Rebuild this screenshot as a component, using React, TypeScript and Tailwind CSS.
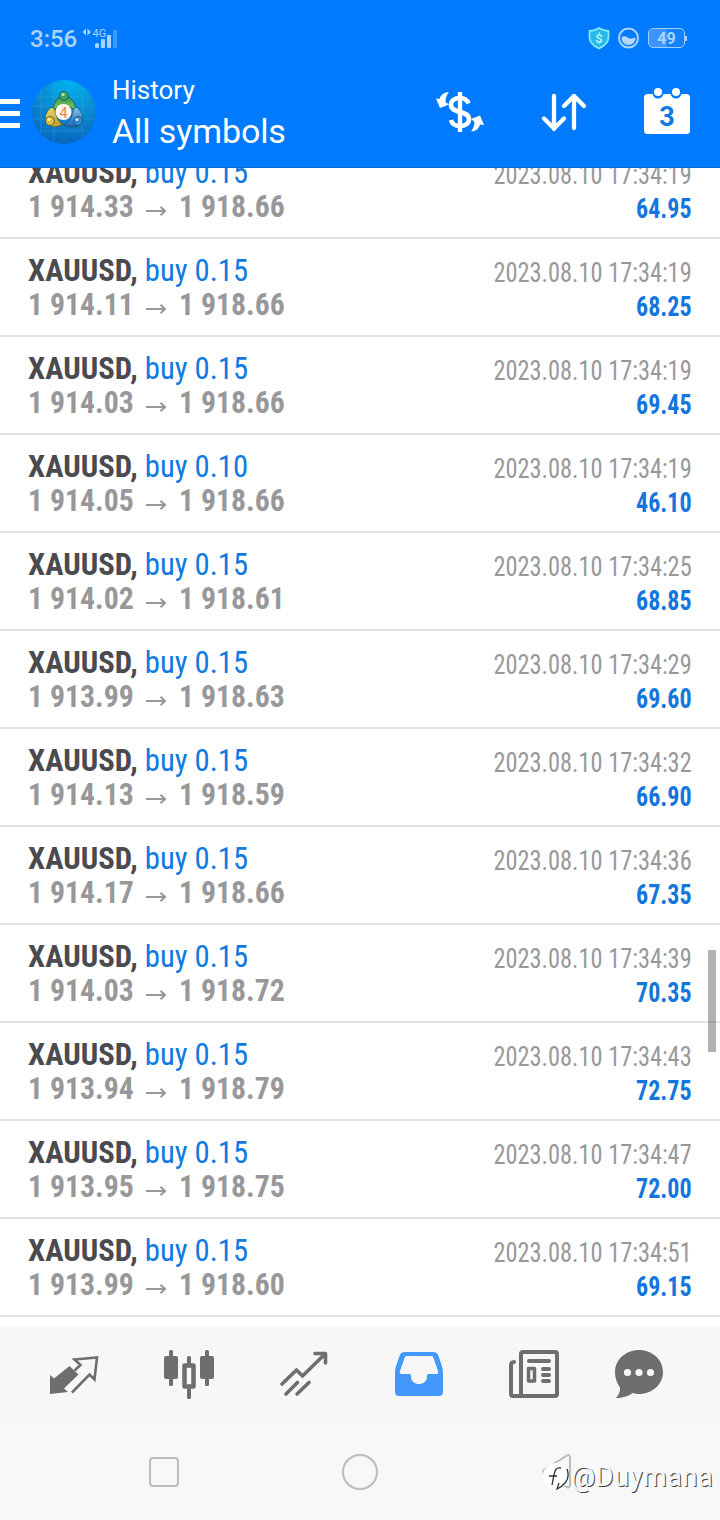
import { FC, ReactNode } from "react";

interface Deal {
  volume: string;
  open: string;
  close: string;
  time: string;
  profit: string;
}

const deals: Deal[] = [
  { volume: "0.15", open: "1 914.33", close: "1 918.66", time: "17:34:19", profit: "64.95" },
  { volume: "0.15", open: "1 914.11", close: "1 918.66", time: "17:34:19", profit: "68.25" },
  { volume: "0.15", open: "1 914.03", close: "1 918.66", time: "17:34:19", profit: "69.45" },
  { volume: "0.10", open: "1 914.05", close: "1 918.66", time: "17:34:19", profit: "46.10" },
  { volume: "0.15", open: "1 914.02", close: "1 918.61", time: "17:34:25", profit: "68.85" },
  { volume: "0.15", open: "1 913.99", close: "1 918.63", time: "17:34:29", profit: "69.60" },
  { volume: "0.15", open: "1 914.13", close: "1 918.59", time: "17:34:32", profit: "66.90" },
  { volume: "0.15", open: "1 914.17", close: "1 918.66", time: "17:34:36", profit: "67.35" },
  { volume: "0.15", open: "1 914.03", close: "1 918.72", time: "17:34:39", profit: "70.35" },
  { volume: "0.15", open: "1 913.94", close: "1 918.79", time: "17:34:43", profit: "72.75" },
  { volume: "0.15", open: "1 913.95", close: "1 918.75", time: "17:34:47", profit: "72.00" },
  { volume: "0.15", open: "1 913.99", close: "1 918.60", time: "17:34:51", profit: "69.15" },
];

const StatusBar = () => (
  <div className="flex h-[56px] items-start justify-between pl-[30px] pr-[32px] text-[#a9d4ff]">
    <div className="flex pt-[24px]">
      <span className="w-[52px] text-[24px] font-medium leading-[30px]">3:56</span>
      <svg width="36" height="24" viewBox="0 0 36 24" className="mt-[2px]">
        <path d="M4 2.500 0.500 6 4 9.500zM5.500 2.500 9 6l-3.500 3.500z" fill="currentColor" />
        <text x="10.500" y="10.500" fontSize="11" fill="currentColor">4G</text>
        <rect x="13" y="17" width="4" height="5" rx="1.500" fill="currentColor" />
        <rect x="19" y="13" width="4" height="9" rx="1" fill="currentColor" />
        <rect x="25" y="9" width="4" height="13" rx="1" fill="currentColor" />
        <rect x="31" y="4" width="4" height="18" rx="1" fill="#3d9aff" />
      </svg>
    </div>
    <div className="flex items-center pt-[26px]">
      <svg width="24" height="24" viewBox="0 0 24 24">
        <path d="M12 2c3 2 6 2.800 9.500 3v6c0 5.500-4 9-9.500 11.500C6.500 20 2.500 16.500 2.500 11V5C6 4.800 9 4 12 2z" fill="#27b7e8" stroke="#7feaf5" strokeWidth="1.800" />
        <text x="12" y="17" fontSize="13" fontWeight="700" textAnchor="middle" fill="#a9f5ff">$</text>
      </svg>
      <svg width="24" height="24" viewBox="0 0 24 24" className="ml-[6px]">
        <circle cx="11.500" cy="12" r="9.500" fill="none" stroke="#a9d4ff" strokeWidth="2" />
        <path d="M4.500 11.500c3-2.500 5-.500 7 .500s4.500.500 7-.500c0 4.500-3 7.500-7 7.500s-7-3.500-7-7.500z" fill="#b5d6ff" />
      </svg>
      <div className="ml-[7px] flex h-[20px] w-[37px] items-center justify-center rounded-[5px] border border-[#9ccfff] bg-[linear-gradient(90deg,#3d93ff_50%,#1482ff_50%)] pt-[2px] text-[16px] font-bold leading-none">
        49
      </div>
      <div className="mr-[1px] h-[5px] w-[2px] bg-[#a9d4ff]" />
    </div>
  </div>
);

const Logo = () => (
  <svg width="64" height="64" viewBox="0 0 64 64">
    <defs>
      <radialGradient id="disc" cx="0.600" cy="0" r="1">
        <stop offset="0" stopColor="#00b4ee" />
        <stop offset="0.600" stopColor="#0a86cf" />
        <stop offset="1" stopColor="#0768bd" />
      </radialGradient>
      <linearGradient id="green" x1="0" y1="0" x2="0" y2="1">
        <stop offset="0" stopColor="#2e8f55" />
        <stop offset="1" stopColor="#8ed05a" />
      </linearGradient>
      <linearGradient id="gold" x1="0" y1="0" x2="1" y2="1">
        <stop offset="0" stopColor="#f3df6a" />
        <stop offset="1" stopColor="#b78f22" />
      </linearGradient>
      <linearGradient id="blue" x1="0" y1="0" x2="0" y2="1">
        <stop offset="0" stopColor="#86c6f2" />
        <stop offset="1" stopColor="#1c62b8" />
      </linearGradient>
    </defs>
    <circle cx="32" cy="32" r="32" fill="url(#disc)" />
    <path d="M6 17h52M1 26h62M1 39h62M7 51h50M9 10v44M22 2v60M50 6v52" stroke="#4fb4ea" strokeWidth="0.600" opacity="0.500" />
    <g stroke="#174f4f" strokeWidth="0.700">
      <path d="M22 30c-1-7 3-13 10-14 8 1 12 7 11 14-4-3-6-4-11-4s-7 1-10 4z" fill="url(#green)" />
      <path d="M20 27c-5 3-8 9-6 16 5 5 12 5 17 1-5-3-6-6-7-10-.500-3-1-5-4-7z" fill="url(#gold)" />
      <path d="M44 27c5 3 8 9 6 16-4 5-12 5-18 2 5-3 7-6 8-10 .500-3 1-6 4-8z" fill="url(#blue)" />
      <circle cx="32" cy="16" r="4.500" fill="#3ca45c" />
      <circle cx="18" cy="41" r="4.500" fill="#dfb93a" />
      <circle cx="46" cy="41" r="4.500" fill="#3188d2" />
    </g>
    <circle cx="31" cy="14.500" r="1.600" fill="#b8e9b6" />
    <circle cx="17" cy="39.500" r="1.600" fill="#fff3ae" />
    <circle cx="45" cy="39.500" r="1.600" fill="#c4e5fb" />
    <circle cx="31.500" cy="32" r="8" fill="#fff6ee" />
    <text x="31.500" y="37.500" fontSize="15" textAnchor="middle" fill="#f08550">4</text>
  </svg>
);

const Header = () => (
  <header className="z-10 h-[168px] shrink-0 border-b border-[#0b66d0] bg-[#007aff] text-white">
    <StatusBar />
    <div className="flex h-[111px] items-start">
      <div className="mt-[43px] w-[20px] space-y-[7px]">
        <div className="h-[5px] bg-white" />
        <div className="h-[5px] bg-white" />
        <div className="h-[5px] bg-white" />
      </div>
      <div className="ml-[12px] mt-[24px]">
        <Logo />
      </div>
      <div className="ml-[16px] mt-[17px] w-[300px]">
        <p className="text-[26px] leading-[34px]">History</p>
        <p className="mt-[4px] text-[34px] leading-[40px] tracking-[-0.100px]">All symbols</p>
      </div>
      <svg width="52" height="48" viewBox="0 0 52 48" className="ml-[22px] mt-[32px]" fill="none">
        <path d="M35.500 15C34 11 31 9.500 27 9.500c-5.500 0-9 2.500-9 7 0 9 18 5 18 14 0 4.500-3.500 7-9 7-4.500 0-8-2-9-6" transform="translate(-1 0.500)" stroke="#fff" strokeWidth="4.600" />
        <path d="M26 4v40" stroke="#fff" strokeWidth="4.400" />
        <path d="M15 4C9 4.500 6.500 7.500 5.500 11L2 10.500 6 20l9-3.500-3.500-2.500C11.500 10 12.500 7 15 4zM37 43.500c6-.500 8-3.500 9-7l4 .500-4-9.500-9 3.500 3.500 3c0 4-1.500 7-3.500 9.500z" fill="#fff" />
      </svg>
      <svg width="48" height="40" viewBox="0 0 48 40" className="ml-[54px] mt-[36px]" fill="none" stroke="#fff" strokeWidth="4.300" strokeLinecap="round" strokeLinejoin="round">
        <path d="M14 4v33M4 26.500 14 36.500l10-10M34 36V4M24 14 34 4l10 10" />
      </svg>
      <svg width="48" height="48" viewBox="0 0 48 48" className="ml-[55px] mt-[31px]">
        <rect x="1" y="7" width="46" height="40" rx="3.500" fill="#fff" />
        <circle cx="15" cy="6" r="5.500" fill="#007aff" />
        <circle cx="33" cy="6" r="5.500" fill="#007aff" />
        <circle cx="15" cy="5" r="4" fill="#fff" />
        <circle cx="33" cy="5" r="4" fill="#fff" />
        <text x="24" y="38.500" fontSize="27" fontWeight="700" textAnchor="middle" fill="#1478e0">3</text>
      </svg>
    </div>
  </header>
);

const DealRow: FC<{ deal: Deal }> = ({ deal }) => (
  <div className="flex h-[98px] justify-between border-b-2 border-[#e2e2e4] px-[28px] pt-[14px]">
    <div>
      <p className="origin-left scale-x-[0.958] whitespace-nowrap text-[32px] leading-[34px] text-[#0f7ae0]">
        <span className="font-bold text-[#4a4a4f]">XAUUSD,</span> buy {deal.volume}
      </p>
      <div className="flex whitespace-nowrap text-[32px] font-bold leading-[34px] text-[#98989a]">
        <p className="w-[118px] origin-left scale-x-[0.93]">{deal.open}</p>
        <svg width="20" height="10" viewBox="0 0 20 10" className="mr-[13px] mt-[17px]" fill="none" stroke="currentColor" strokeWidth="2">
          <path d="M0 5h19M14.500 0.800 19 5l-4.500 4.200" />
        </svg>
        <p className="origin-left scale-x-[0.93]">{deal.close}</p>
      </div>
    </div>
    <div className="pt-[3px] text-right">
      <p className="origin-right scale-x-[0.902] whitespace-nowrap text-[27px] leading-[34px] text-[#98989a]">2023.08.10 {deal.time}</p>
      <p className="origin-right scale-x-[0.89] text-[27px] font-bold leading-[34px] text-[#1476dc]">{deal.profit}</p>
    </div>
  </div>
);

const Tab: FC<{ children: ReactNode }> = ({ children }) => (
  <svg width="54" height="52" viewBox="0 0 54 52" fill="none" className="last:-ml-[10px]">
    {children}
  </svg>
);

const TabBar = () => (
  <nav className="flex h-[98px] items-start gap-[61px] bg-[#f7f7f7] pl-[47px] pt-[22px] text-[#6e6e6e]">
    <Tab>
      <path d="M22.500 18 31.500 26.500 17 40.500l4 3.500-18 2V27l4 3.500z" fill="currentColor" />
      <path d="M28 23.500 34 18 28 12.500l22.500-2L48 32.500l-5-5-17.500 18" transform="translate(-.5 -1)" stroke="currentColor" strokeWidth="2.600" />
    </Tab>
    <Tab>
      <g fill="currentColor">
        <rect x="2" y="8" width="14" height="23" rx="2" />
        <rect x="7" y="2" width="4" height="36" rx="1.500" />
        <rect x="38" y="8" width="14" height="23" rx="2" />
        <rect x="43" y="2" width="4" height="36" rx="1.500" />
        <rect x="25" y="8" width="4" height="10" rx="1.500" />
        <rect x="25" y="40" width="4" height="11" rx="1.500" />
      </g>
      <rect x="22.500" y="17.500" width="9" height="21" stroke="currentColor" strokeWidth="4.500" strokeLinejoin="round" />
    </Tab>
    <Tab>
      <path d="M5 36 19.500 22l6 6L48 6M38 5.500h10.500V15M9 46l11.500-11.500M20 46l12-11.500" stroke="currentColor" strokeWidth="3.600" strokeLinecap="round" strokeLinejoin="round" />
    </Tab>
    <Tab>
      <path d="M13 4h28c3 0 4.500 1 5.500 4C49 15 51 20 51 25v19c0 2.500-1.500 4-4 4H7c-2.500 0-4-1.500-4-4V25c0-5 2-10 4.500-17C8.500 5 10 4 13 4z" fill="#4398fb" />
      <path d="M15 8h24c1.500 0 2 .500 2.500 2L46 23c.500 2 0 3-1.500 3H37c-2 0-2 1-2 2.500 0 10-16 10-16 0 0-1.500 0-2.500-2-2.500H9.500C8 26 7.500 25 8 23l4.500-13c.500-1.500 1-2 2.500-2z" fill="#f7f7f7" />
    </Tab>
    <Tab>
      <g stroke="currentColor" strokeWidth="4" strokeLinecap="round" strokeLinejoin="round">
        <rect x="14" y="4" width="36" height="44" rx="2" />
        <path d="M14 48H6c-2 0-2-1-2-2V17c0-1.500 1-3 3-3M22 13h20M36 21h6M36 27h6M36 33h6" />
      </g>
      <rect x="21.500" y="20.500" width="6" height="12.500" stroke="currentColor" strokeWidth="3.500" strokeLinejoin="round" />
    </Tab>
    <Tab>
      <path d="M27 2c13 0 24 9.500 24 22S40 46 27 46c-2.500 0-4.500-.500-6.500-1-4 3.500-10 5-16.500 5 3-3.500 4.500-7 4-10.500C5 35.500 3 30 3 24 3 11.500 14 2 27 2z" fill="currentColor" />
      <circle cx="15.500" cy="24.500" r="3.600" fill="#f7f7f7" />
      <circle cx="27" cy="24.500" r="3.600" fill="#f7f7f7" />
      <circle cx="38.500" cy="24.500" r="3.600" fill="#f7f7f7" />
    </Tab>
  </nav>
);

const SystemBar = () => (
  <div className="relative flex h-[96px] items-start justify-between bg-[#f8f8f8] pl-[149px] pr-[147px] pt-[30px]">
    <div className="mt-[3px] h-[30px] w-[30px] rounded-[4px] border-2 border-[#bcbcbc]" />
    <div className="h-[36px] w-[36px] rounded-full border-2 border-[#bcbcbc]" />
    <svg width="32" height="36" viewBox="0 0 32 36" fill="none">
      <path d="M26 1.500 4 15c-2.500 1.500-2.500 3.500 0 5l22 13c2 1 3 0 3-2V3.500c0-2-1-3-3-2z" stroke="#bcbcbc" strokeWidth="2" />
    </svg>
    <div className="absolute left-[541px] top-[38px] flex items-center">
      <svg width="30" height="30" viewBox="0 0 30 30">
        <circle cx="15" cy="14" r="13" fill="#fff" />
        <path d="M20 6c-5-1-6 2-7 7l-2 10M8 14h8M26 7c3 8 0 15-10 20l2-6" fill="none" stroke="#333" strokeWidth="1.300" />
      </svg>
      <span className="text-[27px] leading-[30px] tracking-[0.600px] text-[#f9f9f9] [text-shadow:1px_1px_0_#444]">@Duymana</span>
    </div>
  </div>
);

export default function App() {
  return (
    <div className="relative flex h-[1520px] w-[720px] flex-col overflow-hidden bg-white font-['Roboto',sans-serif]">
      <Header />
      <main className="h-[1158px] shrink-0 overflow-hidden">
        <div className="-mt-[27px] font-['Roboto_Condensed','Roboto',sans-serif] [font-stretch:75%]">
          {deals.map((deal, i) => (
            <DealRow key={i} deal={deal} />
          ))}
        </div>
      </main>
      <TabBar />
      <SystemBar />
      <div className="absolute left-[708px] top-[950px] h-[102px] w-[8px] bg-black/30" />
    </div>
  );
}
